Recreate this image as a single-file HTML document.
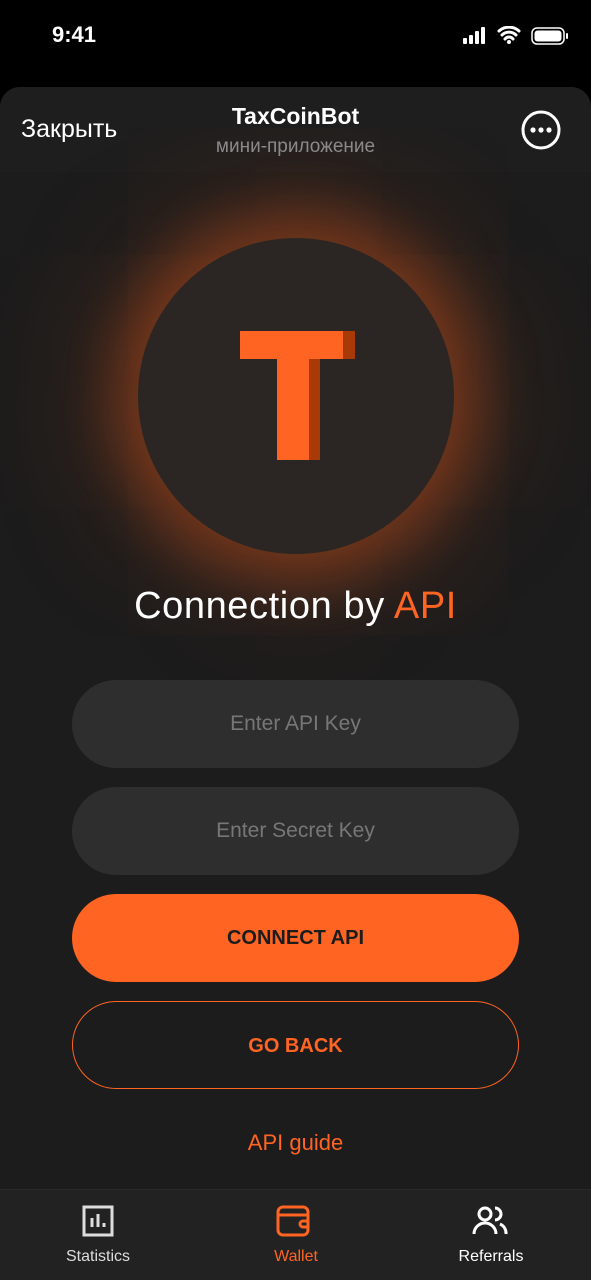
<!DOCTYPE html>
<html><head><meta charset="utf-8"><style>
*{margin:0;padding:0;box-sizing:border-box}
body{width:591px;height:1280px;background:#000;font-family:"Liberation Sans",sans-serif;position:relative;overflow:hidden;color:#fff}
.abs{position:absolute}
.sheet{left:0;top:87px;width:591px;height:1193px;background:#1c1c1c;border-radius:20px 20px 0 0;overflow:hidden}
.field{left:72px;width:447px;height:88px;border-radius:44px;background:#2e2e2e;color:#777;font-size:21px;text-align:center;line-height:88px}
.btn{left:72px;width:447px;height:88px;border-radius:44px;font-size:20px;font-weight:bold;text-align:center;line-height:88px}
.tab{top:1248px;font-size:16px;text-align:center;width:150px}
</style></head><body>
<div class="abs" style="left:52px;top:22px;font-size:22px;font-weight:bold">9:41</div>
<svg class="abs" style="left:462px;top:26px" width="110" height="20" viewBox="0 0 110 20">
<rect x="1" y="12" width="4" height="6" rx="1" fill="#fff"/><rect x="7" y="9" width="4" height="9" rx="1" fill="#fff"/><rect x="13" y="5" width="4" height="13" rx="1" fill="#fff"/><rect x="19" y="1" width="4" height="17" rx="1" fill="#fff"/>
<path d="M37 5a15 15 0 0 1 20 0M40 9a10 10 0 0 1 14 0M43 13a5 5 0 0 1 8 0" stroke="#fff" stroke-width="3" fill="none" stroke-linecap="round"/><circle cx="47" cy="16" r="2" fill="#fff"/>
<rect x="70" y="2" width="32" height="16" rx="5" fill="none" stroke="#fff" stroke-width="1.5"/><rect x="72.5" y="4.5" width="27" height="11" rx="3" fill="#fff"/><rect x="104" y="7" width="2" height="6" rx="1" fill="#fff"/>
</svg>
<div class="abs sheet">
<div class="abs" style="left:0;top:0;width:591px;height:85px;background:#1e1e1e"></div>
<div class="abs" style="left:138px;top:151px;width:316px;height:316px;border-radius:50%;background:#2b2523;box-shadow:0 0 60px 25px rgba(255,98,30,.35),0 0 140px 60px rgba(255,98,30,.12)"></div>
</div>
<div class="abs" style="left:21px;top:115px;font-size:25px">Закрыть</div>
<div class="abs" style="left:0;width:591px;top:103px;text-align:center;font-size:23px;font-weight:bold">TaxCoinBot</div>
<div class="abs" style="left:0;width:591px;top:136px;text-align:center;font-size:19px;color:#8a8a8a">мини-приложение</div>
<svg class="abs" style="left:520px;top:109px" width="42" height="42"><circle cx="21" cy="21" r="18" fill="none" stroke="#fff" stroke-width="3"/><circle cx="13" cy="21" r="2.6" fill="#fff"/><circle cx="21" cy="21" r="2.6" fill="#fff"/><circle cx="29" cy="21" r="2.6" fill="#fff"/></svg>
<svg class="abs" style="left:0;top:0" width="591" height="600">
<rect x="309" y="331" width="46" height="28" fill="#a83a08"/><rect x="309" y="359" width="11" height="101" fill="#a83a08"/>
<rect x="240" y="331" width="103" height="28" fill="#ff6422"/><rect x="277" y="331" width="32" height="129" fill="#ff6422"/>
</svg>
<div class="abs" style="left:0;width:591px;top:585px;text-align:center;font-size:38px;letter-spacing:0.6px">Connection by <span style="color:#ff6422">API</span></div>
<div class="abs field" style="top:680px">Enter API Key</div>
<div class="abs field" style="top:787px">Enter Secret Key</div>
<div class="abs btn" style="top:894px;background:#ff6422;color:#1c1c1c">CONNECT API</div>
<div class="abs btn" style="top:1001px;border:1.5px solid #ff6422;color:#ff6422">GO BACK</div>
<div class="abs" style="left:0;width:591px;top:1130px;text-align:center;font-size:22px;color:#ff6422">API guide</div>
<div class="abs" style="left:0;top:1189px;width:591px;height:91px;background:#222;border-top:1px solid #2a2a2a"></div>
<svg class="abs" style="left:82px;top:1205px" width="34" height="32"><rect x="2" y="2" width="28" height="28" fill="none" stroke="#ddd" stroke-width="3"/><path d="M10 22V13M16 22V9M22 22V18" stroke="#ddd" stroke-width="3"/></svg>
<svg class="abs" style="left:276px;top:1204px" width="36" height="34"><rect x="2" y="3" width="30" height="28" rx="5" fill="none" stroke="#ff6422" stroke-width="3"/><path d="M2 11H32" stroke="#ff6422" stroke-width="3"/><path d="M32 17h-5a2 2 0 0 0 0 6h5" fill="none" stroke="#ff6422" stroke-width="3"/></svg>
<svg class="abs" style="left:472px;top:1205px" width="40" height="32"><circle cx="13" cy="9" r="6" fill="none" stroke="#fff" stroke-width="3"/><path d="M2 29a11 11 0 0 1 22 0" fill="none" stroke="#fff" stroke-width="3"/><path d="M23 3a6 6 0 0 1 0 12M28 19a10 10 0 0 1 6 10" fill="none" stroke="#fff" stroke-width="3"/></svg>
<div class="abs tab" style="left:23px;color:#ddd">Statistics</div>
<div class="abs tab" style="left:221px;color:#ff6422">Wallet</div>
<div class="abs tab" style="left:416px;color:#fff">Referrals</div>
</body></html>
